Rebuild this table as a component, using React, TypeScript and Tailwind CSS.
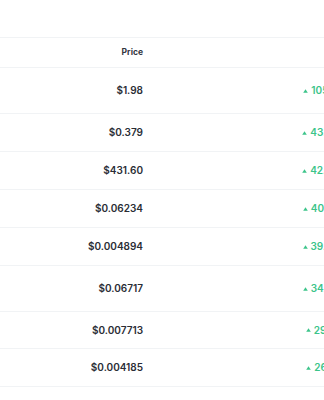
const rows = [
  { price: "$1.98", change: "105.11%", h: "h-[46px]" },
  { price: "$0.379", change: "43.58%", h: "h-[38px]" },
  { price: "$431.60", change: "42.96%", h: "h-[38px]" },
  { price: "$0.06234", change: "40.27%", h: "h-[38px]" },
  { price: "$0.004894", change: "39.64%", h: "h-[38px]" },
  { price: "$0.06717", change: "34.85%", h: "h-[46px]" },
  { price: "$0.007713", change: "29.12%", h: "h-[37px]" },
  { price: "$0.004185", change: "26.17%", h: "h-[38px]" },
];

const Caret = () => (
  <svg width="5" height="4" viewBox="0 0 5 4" className="mr-[3px] shrink-0">
    <path d="M2.5 0.3 L4.8 3.7 L0.2 3.7 Z" fill="#3cc48a" />
  </svg>
);

export default function App() {
  return (
    <div
      className="w-[324px] h-[400px] overflow-hidden bg-white pt-[37px]"
      style={{ fontFamily: "Inter, 'Noto Sans', sans-serif" }}
    >
      <div className="w-[360px]">
        {/* header */}
        <div className="grid grid-cols-[153px_196px] h-[31px] items-center border-t border-b border-[#f1f3f5]">
          <div className="text-right pr-[10px] text-[8.5px] font-bold text-[#333640]">
            Price
          </div>
          <div />
        </div>

        {/* rows */}
        {rows.map((r) => (
          <div
            key={r.price}
            className={`grid grid-cols-[153px_196px] items-center border-b border-[#f1f3f5] ${r.h}`}
          >
            <div className="text-right pr-[10px] text-[10px] font-semibold text-[#2a2d35]">
              {r.price}
            </div>
            <div className="flex items-center justify-end text-[10px] font-semibold text-[#3cc48a]">
              <Caret />
              {r.change}
            </div>
          </div>
        ))}
      </div>
    </div>
  );
}
